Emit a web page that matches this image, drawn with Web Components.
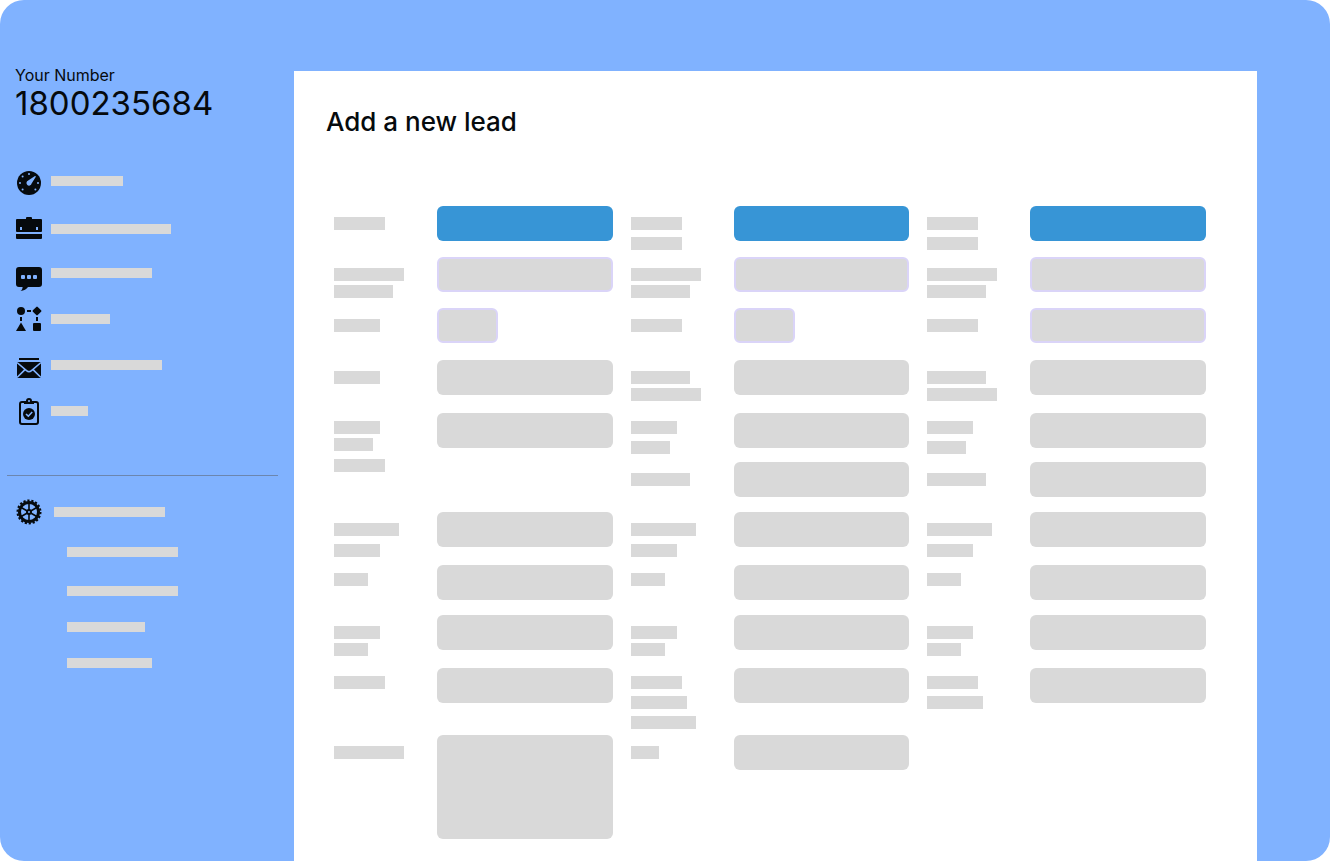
<!DOCTYPE html>
<html lang="en">
<head>
<meta charset="utf-8">
<meta name="viewport" content="width=device-width, initial-scale=1">
<title>Add a new lead</title>
<style>
  body {
    margin: 0;
    background: #fff;
    color: #060a0d;
    font-family: Inter, "Liberation Sans", sans-serif;
    --bar: #d9d9d9;
    --surface: #80b2ff;
    --accent: #3795d6;
    --outline: #dad4f8;
  }
</style>
</head>
<body>

<crm-shell>
  <crm-sidebar slot="side" label="Your Number" number="1800235684">
    <crm-nav-item icon="gauge" width="72" label="Dashboard"></crm-nav-item>
    <crm-nav-item icon="briefcase" width="120" label="Workspace"></crm-nav-item>
    <crm-nav-item icon="chat" width="101" label="Messages"></crm-nav-item>
    <crm-nav-item icon="flow" width="59" label="Flows"></crm-nav-item>
    <crm-nav-item icon="mail" width="111" label="Email"></crm-nav-item>
    <crm-nav-item icon="task" width="37" label="Tasks"></crm-nav-item>

    <crm-nav-item slot="settings" icon="gear" width="111" label="Settings"></crm-nav-item>
    <crm-nav-item slot="sub" width="111" label="Account"></crm-nav-item>
    <crm-nav-item slot="sub" width="111" label="Numbers"></crm-nav-item>
    <crm-nav-item slot="sub" width="78" label="Users"></crm-nav-item>
    <crm-nav-item slot="sub" width="85" label="Billing"></crm-nav-item>
  </crm-sidebar>

  <crm-lead-form heading="Add a new lead"></crm-lead-form>
</crm-shell>

<script>
const ICONS = {
  gauge: `
    <circle cx="13" cy="19" r="12"/>
    <g class="cut">
      <circle cx="13" cy="10" r="1"/><circle cx="4" cy="19" r="1"/><circle cx="22" cy="19" r="1"/>
      <circle cx="6.6" cy="12.6" r="1"/><circle cx="6.6" cy="25.4" r="1"/><circle cx="19.4" cy="25.4" r="1"/>
      <path d="M20 12.6 15.6 19.6A2.6 2.6 0 1 1 12.2 16.6L19 12z"/>
    </g>`,
  briefcase: `
    <path d="M10 7V6a1 1 0 0 1 1-1h4a1 1 0 0 1 1 1v1h9a1 1 0 0 1 1 1v11a1 1 0 0 1-1 1H1a1 1 0 0 1-1-1V8a1 1 0 0 1 1-1z"/>
    <path d="M0 22h26v4a1 1 0 0 1-1 1H1a1 1 0 0 1-1-1z"/>
    <rect class="cut" x="4" y="15" width="2" height="3"/><rect class="cut" x="20" y="15" width="2" height="3"/>`,
  chat: `
    <path d="M3 11h20a3 3 0 0 1 3 3v14a3 3 0 0 1-3 3H12c-1.5 2.2-4 3.8-7.5 4C6 34 6.6 32.5 6.6 31H3a3 3 0 0 1-3-3V14a3 3 0 0 1 3-3z"/>
    <g class="cut">
      <rect x="5" y="19" width="4" height="4" rx="1"/><rect x="11" y="19" width="4" height="4" rx="1"/><rect x="17" y="19" width="4" height="4" rx="1"/>
    </g>`,
  flow: `
    <circle cx="5" cy="9" r="4"/>
    <path d="M20.3 4.9a1 1 0 0 1 1.4 0l3.4 3.4a1 1 0 0 1 0 1.4l-3.4 3.4a1 1 0 0 1-1.4 0l-3.4-3.4a1 1 0 0 1 0-1.4z"/>
    <path d="M11 8h4v2h-4zM4 15h2v4H4zM20 15h2v4h-2z"/>
    <path d="M5 20.6 10 29H0z"/>
    <rect x="17" y="21" width="8" height="8" rx="1"/>`,
  mail: `
    <rect x="3" y="10" width="20" height="2"/>
    <rect x="1" y="14" width="24" height="16"/>
    <path class="cut-line" d="M1 14.5 10.5 22.7Q13 24.7 15.5 22.7L25 14.5M1 29.5 9 21.6M25 29.5 17 21.6"/>`,
  task: `
    <rect class="line" x="4" y="8" width="18" height="22" rx="2"/>
    <path d="M8 7h2a3 3 0 0 1 6 0h2v3H8z"/>
    <circle class="cut" cx="13" cy="7" r="1"/>
    <circle cx="13" cy="20" r="6"/>
    <path class="cut-line" d="M10 20 12.3 22.2 16.2 18"/>`,
  gear: `
    <circle class="line" cx="13" cy="17" r="11.5" stroke-dasharray="2.2 1.813"/>
    <circle class="line ring" cx="13" cy="17" r="9.5"/>
    <circle class="line" cx="13" cy="17" r="2"/>
    <path class="line spoke" d="M13 15V8M13 19V26M11.3 16 5.2 12.5M14.7 16 20.8 12.5M11.3 18 5.2 21.5M14.7 18 20.8 21.5"/>`
};

// Cells of the form, left to right. `rows` is the number of grid rows to span.
const FIELDS = [
  { bars: [51], kind: 'primary' },
  { bars: [51, 51], kind: 'primary' },
  { bars: [51, 51], kind: 'primary' },

  { bars: [70, 59], gaps: [4], kind: 'outlined' },
  { bars: [70, 59], gaps: [4], kind: 'outlined' },
  { bars: [70, 59], gaps: [4], kind: 'outlined' },

  { bars: [46], kind: 'outlined short' },
  { bars: [51], kind: 'outlined short' },
  { bars: [51], kind: 'outlined' },

  { bars: [46] },
  { bars: [59, 70], gaps: [4] },
  { bars: [59, 70], gaps: [4] },

  { bars: [46, 39, 51], gaps: [4, 8], raised: true, rows: 2 },
  { bars: [46, 39], raised: true },
  { bars: [46, 39], raised: true },

  { bars: [59] },
  { bars: [59] },

  { bars: [65, 46], gaps: [8] },
  { bars: [65, 46], gaps: [8] },
  { bars: [65, 46], gaps: [8] },

  { bars: [34], raised: true },
  { bars: [34], raised: true },
  { bars: [34], raised: true },

  { bars: [46, 34], gaps: [4] },
  { bars: [46, 34], gaps: [4] },
  { bars: [46, 34], gaps: [4] },

  { bars: [51], raised: true },
  { bars: [51, 56, 65], raised: true },
  { bars: [51, 56], raised: true },

  { bars: [70], kind: 'area' },
  { bars: [28] }
];

/**
 * @customElement crm-shell
 *
 * Slots: side (navigation), default (page content)
 */
class CrmShell extends HTMLElement {
  constructor() {
    super();
    this.attachShadow({ mode: 'open' });
    this.shadowRoot.innerHTML = `
      <style>
        :host {
          display: grid;
          grid-template-columns: 294px minmax(0, 1fr) 73px;
          min-height: 100vh;
          background: var(--surface);
          border-radius: 24px;
          overflow: hidden;
        }
        main {
          display: grid;
          margin-top: 71px;
          background: #fff;
        }
      </style>
      <slot name="side"></slot>
      <main><slot></slot></main>
    `;
  }
}

/**
 * @customElement crm-sidebar
 *
 * @attr {string} label - Caption above the number.
 * @attr {string} number - The phone number.
 */
class CrmSidebar extends HTMLElement {
  constructor() {
    super();
    this.attachShadow({ mode: 'open' });
  }

  connectedCallback() {
    this.shadowRoot.innerHTML = `
      <style>
        :host { display: block; padding-top: 65px; }
        header { padding-left: 15px; }
        p { margin: 0; }
        .caption { font-size: 16px; line-height: 20px; }
        .number { font-size: 33px; line-height: 36px; }
        .primary {
          display: grid;
          grid-template-rows: 48px 44px 46px 46px 46px 34px;
          margin-top: 43px;
          padding-left: 16px;
        }
        hr {
          margin: 47px 16px 19px 7px;
          border: 0;
          border-top: 1px solid #6c86ae;
        }
        .settings { padding-left: 16px; --item-gap: 12px; }
        .sub {
          display: grid;
          grid-template-rows: 39px 36px 36px 34px;
          margin-top: 6px;
          padding-left: 67px;
        }
      </style>
      <header>
        <p class="caption">${this.getAttribute('label')}</p>
        <p class="number">${this.getAttribute('number')}</p>
      </header>
      <nav class="primary"><slot></slot></nav>
      <hr>
      <nav>
        <div class="settings"><slot name="settings"></slot></div>
        <div class="sub"><slot name="sub"></slot></div>
      </nav>
    `;
  }
}

/**
 * @customElement crm-nav-item
 *
 * @attr {string} icon - Key of ICONS. Left out for sub items.
 * @attr {number} width - Width of the bar.
 * @attr {string} label - Accessible name of the link.
 */
class CrmNavItem extends HTMLElement {
  constructor() {
    super();
    this.attachShadow({ mode: 'open' });
  }

  connectedCallback() {
    const icon  = ICONS[this.getAttribute('icon')];
    const width = Number(this.getAttribute('width')) || 100;

    this.shadowRoot.innerHTML = `
      <style>
        :host { display: block; }
        a {
          display: inline-flex;
          align-items: center;
          gap: var(--item-gap, 9px);
          height: 34px;
          color: inherit;
          vertical-align: top;
        }
        svg { width: 26px; height: 34px; overflow: visible; fill: #060a0d; }
        .cut { fill: var(--surface); }
        .cut-line { fill: none; stroke: var(--surface); stroke-width: 1.6; }
        .line { fill: none; stroke: #060a0d; stroke-width: 2; }
        .ring { stroke-width: 3; }
        .spoke { stroke-width: 1.6; }
        .bar { width: ${width}px; height: 10px; background: var(--bar); }
      </style>
      <a href="#" aria-label="${this.getAttribute('label')}">
        ${icon ? `<svg viewBox="0 0 26 34" aria-hidden="true">${icon}</svg>` : ''}
        <span class="bar"></span>
      </a>
    `;
  }
}

/**
 * @customElement crm-field
 *
 * Properties:
 * config - { bars, gaps, kind, raised }
 */
class CrmField extends HTMLElement {
  constructor() {
    super();
    this.attachShadow({ mode: 'open' });
    this.config = { bars: [] };
  }

  connectedCallback() {
    const { bars, gaps = [], kind = '', raised } = this.config;

    const label = bars.map((width, i) => {
      const gap = i === 0 ? 0 : (gaps[i - 1] || 7);
      return `<span style="width: ${width}px; margin-top: ${gap}px"></span>`;
    }).join('');

    this.shadowRoot.innerHTML = `
      <style>
        :host {
          display: grid;
          grid-template-columns: 103px minmax(0, 1fr);
          align-items: start;
        }
        label { display: block; padding-top: 11px; }
        label.raised { padding-top: 8px; }
        label span { display: block; height: 13px; background: var(--bar); }
        .control {
          display: block;
          box-sizing: border-box;
          width: 100%;
          height: 35px;
          margin: 0;
          padding: 0 10px;
          border: 0;
          border-radius: 6px;
          background: var(--bar);
          color: inherit;
          font: inherit;
          appearance: none;
          resize: none;
        }
        .control.primary { background: var(--accent); }
        .control.outlined { border: 2px solid var(--outline); }
        .control.short { width: 61px; }
        .control.area { height: 104px; padding: 10px; }
      </style>
      <label for="control" class="${raised ? 'raised' : ''}">${label}</label>
      ${this._control(kind)}
    `;
  }

  _control(kind) {
    if (kind === 'primary') {
      return `<select id="control" class="control primary"><option></option></select>`;
    }
    if (kind === 'area') {
      return `<textarea id="control" class="control area"></textarea>`;
    }
    return `<input id="control" type="text" class="control ${kind}">`;
  }
}

/**
 * @customElement crm-lead-form
 *
 * @attr {string} heading - Title above the form.
 */
class CrmLeadForm extends HTMLElement {
  constructor() {
    super();
    this.attachShadow({ mode: 'open' });
  }

  connectedCallback() {
    this.shadowRoot.innerHTML = `
      <style>
        :host { display: block; padding: 35px 51px 22px 32px; }
        h1 {
          margin: 0 0 68px;
          font-size: 26px;
          font-weight: 500;
          line-height: 32px;
        }
        form {
          display: grid;
          grid-template-columns: repeat(3, minmax(0, 1fr));
          grid-template-rows: 51px 51px 52px 53px 49px 50px 53px 50px 53px 67px auto;
          column-gap: 18px;
          padding-left: 8px;
        }
      </style>
      <h1>${this.getAttribute('heading')}</h1>
      <form></form>
    `;

    const form = this.shadowRoot.querySelector('form');
    FIELDS.forEach((config) => {
      const field = document.createElement('crm-field');
      field.config = config;
      if (config.rows) {
        field.style.gridRow = `span ${config.rows}`;
      }
      form.append(field);
    });
  }
}

customElements.define('crm-shell', CrmShell);
customElements.define('crm-sidebar', CrmSidebar);
customElements.define('crm-nav-item', CrmNavItem);
customElements.define('crm-field', CrmField);
customElements.define('crm-lead-form', CrmLeadForm);
</script>
</body>
</html>
